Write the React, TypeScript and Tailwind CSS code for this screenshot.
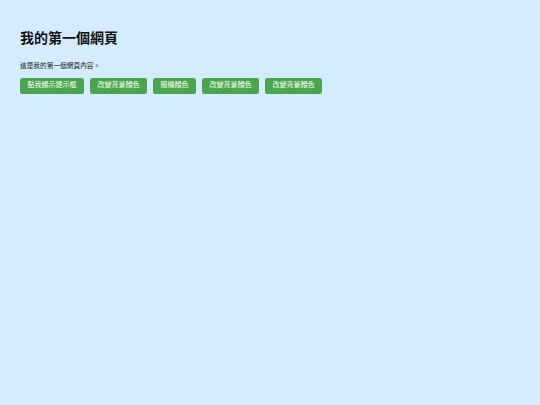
const buttons = ["點我顯示提示框", "改變背景顏色", "隨機顏色", "改變背景顏色", "改變背景顏色"]

export default function App() {
  return (
    <div
      className="min-h-[405px] w-full bg-[#d5ebff] px-5 pt-[30px]"
      style={{ fontFamily: '"Liberation Serif", "Noto Sans CJK TC", serif' }}
    >
      <h1 className="text-[14px] font-bold leading-[18px] text-[#111]">我的第一個網頁</h1>
      <p className="mt-[13px] text-[6.7px] leading-[9px] text-[#222]">這是我的第一個網頁內容。</p>
      <div className="mt-[8px] flex gap-[6px]">
        {buttons.map((label, i) => (
          <button
            key={i}
            className="h-[15.5px] rounded-[2.5px] bg-[#48a64c] px-[7.5px] text-[7px] leading-[15.5px] text-white"
          >
            {label}
          </button>
        ))}
      </div>
    </div>
  )
}
